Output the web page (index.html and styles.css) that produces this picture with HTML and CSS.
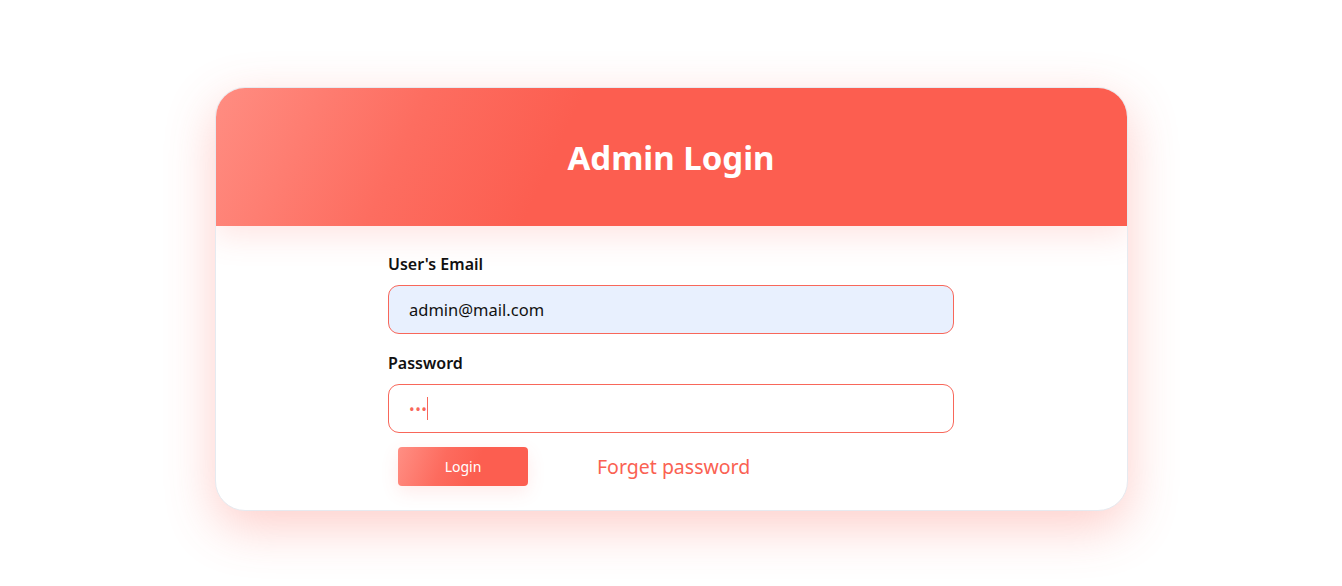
FILE: index.html
```html
<!DOCTYPE html>
<html lang="en">
<head>
  <meta charset="UTF-8" />
  <meta name="viewport" content="width=device-width, initial-scale=1.0"/>
  <title>Admin Login</title>
  <link rel="stylesheet" href="styles.css">
</head>
<body>

  <div class="login-card">
    <div class="login-header">
      <h1>Admin Login</h1>
    </div>

    <form class="login-form">
      <label for="email">User's Email</label>
      <input type="email" id="email" class="filled" value="admin@mail.com" />

      <label for="password">Password</label>
      <div class="password-box">
        <span class="dots">•••</span><span class="caret"></span>
      </div>

      <div class="actions">
        <button type="button" class="login-btn">Login</button>
        <a href="#" class="forget-link">Forget password</a>
      </div>
    </form>
  </div>

</body>
</html>
```

FILE: styles.css
```css
* { box-sizing: border-box; }

body {
  font-family: 'Noto Sans', 'Open Sans', sans-serif;
  background: #fff;
  margin: 0;
  padding: 87px 0 0;
  min-height: 100vh;
}

.login-card {
  width: 913px;
  margin: 0 auto;
  background: #fff;
  border: 1px solid #e6eaf0;
  border-radius: 30px;
  overflow: hidden;
  box-shadow: 0 16px 50px rgba(252, 94, 81, 0.3);
}

.login-header {
  height: 139px;
  margin: -1px -1px 0;
  display: flex;
  justify-content: center;
  align-items: center;
  background: linear-gradient(115deg, #ff8d82 0%, #fd6d60 22%, #fc5e50 38%, #fc5e50 100%);
  box-shadow: 0 10px 30px rgba(252, 94, 81, 0.16);
  position: relative;
}

.login-header h1 {
  margin: 0;
  color: #fff;
  font-size: 33px;
  font-weight: 700;
  padding-top: 2px;
}

.login-form {
  width: 566px;
  margin: 0 auto;
  padding: 27px 0 24px;
}

.login-form label {
  display: block;
  font-size: 16px;
  font-weight: 600;
  color: #111;
  margin-bottom: 10px;
}

.login-form input,
.password-box {
  display: block;
  width: 100%;
  height: 49px;
  padding: 0 20px;
  border: 1px solid #f8675a;
  border-radius: 11px;
  font-family: inherit;
  font-size: 16.5px;
  color: #111;
  background: #fff;
  outline: none;
  margin-bottom: 18px;
}

.login-form input.filled {
  background: #e8f0fe;
}

.password-box {
  display: flex;
  align-items: center;
  margin-bottom: 14px;
}

.dots {
  color: #f8675a;
  font-size: 15px;
  letter-spacing: 0.5px;
}

.caret {
  display: inline-block;
  width: 1px;
  height: 23px;
  background: #f8675a;
}

.actions {
  display: flex;
  align-items: center;
  padding-left: 10px;
}

.login-btn {
  width: 130px;
  height: 39px;
  border: none;
  border-radius: 4px;
  color: #fff;
  font-family: inherit;
  font-size: 14px;
  background: linear-gradient(110deg, #ff8f84 0%, #fd6b5e 35%, #fc5e50 60%);
  box-shadow: 0 6px 18px rgba(252, 94, 81, 0.12);
  cursor: pointer;
}

.forget-link {
  margin-left: 69px;
  color: #fa6152;
  font-size: 19.5px;
  text-decoration: none;
}
```
